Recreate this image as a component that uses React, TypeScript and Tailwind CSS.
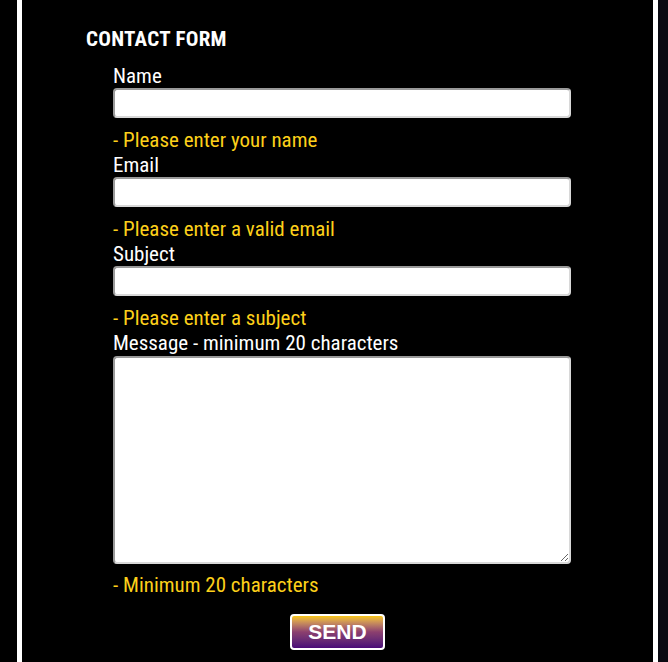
import React from "react";

const fields = [
  { label: "Name", error: "- Please enter your name" },
  { label: "Email", error: "- Please enter a valid email" },
  { label: "Subject", error: "- Please enter a subject" },
];

const inputCls =
  "block h-[30px] w-[458px] rounded-[4px] border-2 border-t-[#9a9a9a] border-l-[#9a9a9a] border-r-[#d8d8d8] border-b-[#d8d8d8] bg-white px-2 text-black outline-none";

export default function App() {
  return (
    <div className="flex min-h-[662px] bg-[#0a0a12]">
      <div className="w-[17px] shrink-0 bg-black" />
      <div
        className="w-[641px] shrink-0 border-x-[5px] border-white bg-black pb-[12px] pt-[28px] text-white"
        style={{ fontFamily: '"Roboto Condensed", "Liberation Sans Narrow", Roboto, sans-serif', fontStretch: "condensed" }}
      >
        <h3 className="ml-[64px] text-[21px] font-bold leading-[22px] tracking-[0.3px]">CONTACT FORM</h3>
        <form className="ml-[91px] mt-[15px]" onSubmit={(e) => e.preventDefault()}>
          {fields.map((f) => (
            <div key={f.label} className="mb-[3px]">
              <label className="block text-[21px] leading-[22px]">{f.label}</label>
              <input type="text" className={`mt-[1px] ${inputCls}`} />
              <p className="mt-[11px] text-[21px] leading-[22px] text-[#fdd01a]">{f.error}</p>
            </div>
          ))}
          <label className="block text-[21px] leading-[22px]">Message - minimum 20 characters</label>
          <textarea className="mt-[2px] block h-[208px] w-[458px] resize rounded-[4px] border-2 border-t-[#9a9a9a] border-l-[#9a9a9a] border-r-[#d8d8d8] border-b-[#d8d8d8] bg-white p-1 text-black outline-none" />
          <p className="mt-[10px] text-[21px] leading-[22px] text-[#fdd01a]">- Minimum 20 characters</p>
        </form>
        <div className="mt-[18px] flex justify-center">
          <button
            type="submit"
            className="h-[36px] w-[95px] rounded-[4px] border-2 border-white bg-gradient-to-b from-[#f7c600] via-[#8c3f6e] to-[#4a0878] text-[21px] font-bold text-white"
            style={{ fontFamily: '"Liberation Sans", Arial, sans-serif' }}
          >
            SEND
          </button>
        </div>
      </div>
    </div>
  );
}
